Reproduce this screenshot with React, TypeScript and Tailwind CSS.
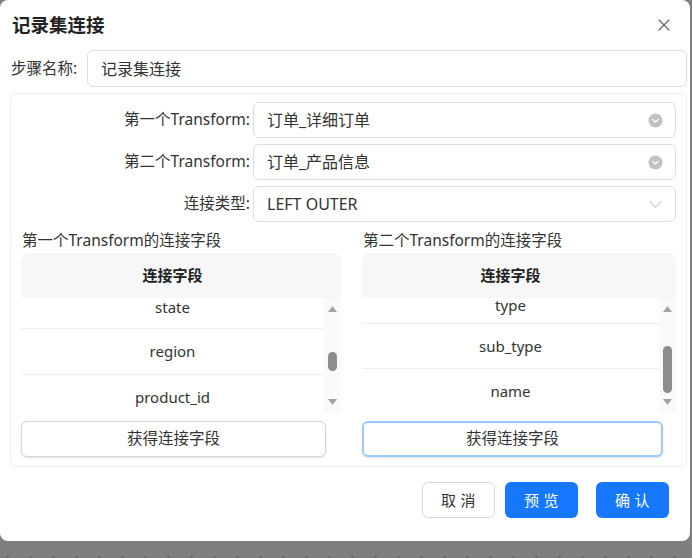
import React from 'react';
import { X } from 'lucide-react';

const font = { fontFamily: '"Noto Sans", "Noto Sans CJK SC", sans-serif' };

const leftFields = ['state', 'region', 'product_id'];
const rightFields = ['type', 'sub_type', 'name'];

const CircleChevron = () => (
  <svg width="15" height="15" viewBox="0 0 16 16">
    <circle cx="8" cy="8" r="7.5" fill="#c2c2c2" />
    <path d="M5 6.8 L8 9.6 L11 6.8" fill="none" stroke="#fff" strokeWidth="1.4" strokeLinecap="round" />
  </svg>
);

const LineChevron = () => (
  <svg width="15" height="15" viewBox="0 0 16 16">
    <path d="M2 5 L8 11 L14 5" fill="none" stroke="#c6c6c6" strokeWidth="1.2" />
  </svg>
);

const FieldRow = ({ label, value, icon }: { label: string; value: string; icon: React.ReactNode }) => (
  <div className="flex items-center">
    <div className="w-[232px] text-right text-[15.5px] text-[#333] pr-[3px]">{label}</div>
    <div className="flex-1 h-[36px] border border-[#dedede] rounded-md flex items-center justify-between pl-[13px] pr-[12px] text-[16px] text-[#333]">
      <span>{value}</span>
      {icon}
    </div>
  </div>
);

// the list is scrolled a little, so the first row shows only its lower part
const FieldTable = ({
  title,
  fields,
  firstRow,
  rowH,
  thumbTop,
  thumbH,
  focused,
}: {
  title: string;
  fields: string[];
  firstRow: string;
  rowH: string;
  thumbTop: string;
  thumbH: string;
  focused?: boolean;
}) => (
  <div className="flex flex-col">
    <div className="h-[20px] leading-[20px] text-[15.5px] text-[#333] pl-[1px]">{title}</div>
    <div className="mt-[3px] h-[45px] bg-[#f7f7f7] rounded-t-lg flex items-center justify-center pr-[17px] text-[15px] font-bold text-[#222]">
      连接字段
    </div>
    <div className="flex h-[115px]">
      <div className="flex-1 overflow-hidden bg-white">
        {fields.map((f, i) => (
          <div
            key={f}
            className={`${i === 0 ? firstRow : rowH} flex items-center justify-center border-b border-[#eeeeee] text-[15px] text-[#333]`}
          >
            {f}
          </div>
        ))}
      </div>
      <div className="w-[17px] bg-[#fafafa] relative">
        <svg className="absolute left-[4px] top-[8px]" width="9" height="6" viewBox="0 0 9 6">
          <path d="M0 6 L4.5 0 L9 6 Z" fill="#a3a3a3" />
        </svg>
        <div className={`absolute left-[4px] w-[9px] rounded-full bg-[#8d8d8d] ${thumbTop} ${thumbH}`} />
        <svg className="absolute left-[4px] bottom-[8px]" width="9" height="6" viewBox="0 0 9 6">
          <path d="M0 0 L9 0 L4.5 6 Z" fill="#a3a3a3" />
        </svg>
      </div>
    </div>
    <button
      className={`mt-[8px] h-[36px] rounded-md bg-white text-[15.5px] text-[#333] shadow-[0_1px_2px_rgba(0,0,0,0.12)] ${
        focused ? 'w-[calc(100%-13px)] border-2 border-[#9ccbff]' : 'w-[calc(100%-15px)] border border-[#d6d6d6]'
      }`}
    >
      获得连接字段
    </button>
  </div>
);

export default function App() {
  return (
    <div
      style={font}
      className="w-[692px] h-[558px] overflow-hidden bg-[#7f7f7f] bg-[radial-gradient(circle,#6a6a6a_1px,transparent_1.5px)] bg-[size:23px_23px] bg-[position:-4px_-6px]"
    >
      <div className="w-[690px] h-[541px] bg-white rounded-lg flex flex-col pl-[10px] pr-[3px]">
        <div className="mt-[12px] h-[26px] flex items-center justify-between pl-[2px] pr-[13px]">
          <span className="text-[18.5px] font-bold text-[#222]">记录集连接</span>
          <X size={20} strokeWidth={1.5} className="text-[#666]" />
        </div>

        <div className="mt-[12px] flex items-center">
          <span className="w-[77px] pl-[1px] text-[15.5px] text-[#333]">步骤名称:</span>
          <div className="flex-1 h-[37px] border border-[#dedede] rounded-md flex items-center pl-[13px] text-[16px] text-[#333]">
            记录集连接
          </div>
        </div>

        <div className="mt-[6px] border border-[#efefef] rounded-md pt-[8px] pb-[9px] pl-[10px] pr-[10px] flex flex-col">
          <div className="flex flex-col gap-[6px]">
            <FieldRow label="第一个Transform:" value="订单_详细订单" icon={<CircleChevron />} />
            <FieldRow label="第二个Transform:" value="订单_产品信息" icon={<CircleChevron />} />
            <FieldRow label="连接类型:" value="LEFT OUTER" icon={<LineChevron />} />
          </div>
          <div className="mt-[8px] grid grid-cols-[320px_1fr] gap-[21px]">
            <FieldTable
              title="第一个Transform的连接字段"
              fields={leftFields}
              firstRow="h-[31px] pb-[12px] leading-[18px]"
              rowH="h-[46px]"
              thumbTop="top-[54px]"
              thumbH="h-[19px]"
            />
            <FieldTable
              title="第二个Transform的连接字段"
              fields={rightFields}
              firstRow="h-[26px] pb-[10px] leading-[15px]"
              rowH="h-[45px]"
              thumbTop="top-[48px]"
              thumbH="h-[47px]"
              focused
            />
          </div>
        </div>

        <div className="mt-[15px] flex justify-end pr-[18px]">
          <button className="w-[73px] h-[36px] rounded-md border border-[#d9d9d9] bg-white text-[15px] text-[#333] tracking-[0.3em] pl-[4px]">
            取消
          </button>
          <button className="ml-[10px] w-[73px] h-[36px] rounded-md bg-[#1677ff] text-[15px] text-white tracking-[0.3em] pl-[4px]">
            预览
          </button>
          <button className="ml-[18px] w-[73px] h-[36px] rounded-md bg-[#1677ff] text-[15px] text-white tracking-[0.3em] pl-[4px]">
            确认
          </button>
        </div>
      </div>
    </div>
  );
}
